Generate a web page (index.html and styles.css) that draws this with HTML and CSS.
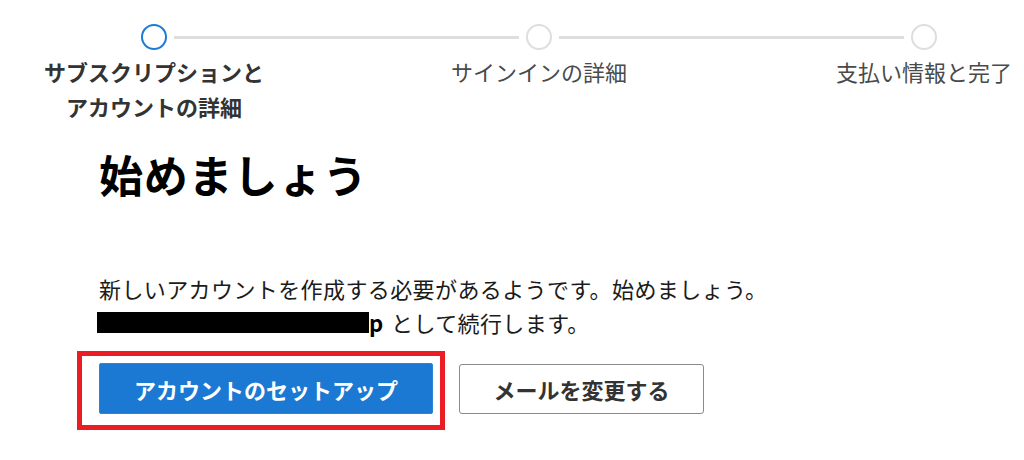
FILE: index.html
```html
<!DOCTYPE html>
<html lang="ja">
<head>
    <meta charset="utf-8">
    <title>始めましょう</title>
    <link rel="stylesheet" href="styles.css">
</head>
<body>
    <div class="stepper">
        <div class="step active">
            <span class="dot"></span>
            <span class="step-label">サブスクリプションと<br>アカウントの詳細</span>
        </div>
        <span class="bar"></span>
        <div class="step">
            <span class="dot"></span>
            <span class="step-label">サインインの詳細</span>
        </div>
        <span class="bar"></span>
        <div class="step">
            <span class="dot"></span>
            <span class="step-label">支払い情報と完了</span>
        </div>
    </div>

    <div class="content">
        <h1>始めましょう</h1>
        <p class="lead">
            新しいアカウントを作成する必要があるようです。始めましょう。<br>
            <span class="redact"></span><span class="tail">p</span>として続行します。
        </p>

        <div class="actions">
            <div class="highlight">
                <button class="btn primary">アカウントのセットアップ</button>
            </div>
            <button class="btn secondary">メールを変更する</button>
        </div>
    </div>
</body>
</html>
```

FILE: styles.css
```css
html, body {
    margin: 0;
    background: #ffffff;
    overflow: hidden;
}
body {
    font-family: "Noto Sans CJK JP", "Noto Sans", sans-serif;
    color: #1b1b1b;
}

/* stepper */
.stepper {
    display: flex;
    align-items: flex-start;
    padding: 24px 87px 0 141px;
}
.step {
    display: flex;
    flex-direction: column;
    align-items: center;
    width: 26px;
}
.dot {
    box-sizing: border-box;
    width: 26px;
    height: 26px;
    border: 2px solid #dedede;
    border-radius: 50%;
    background: #fff;
}
.step.active .dot {
    border-color: #1e7bd5;
}
.step-label {
    margin-top: 4px;
    white-space: nowrap;
    text-align: center;
    font-size: 22px;
    line-height: 35px;
    color: #4a4a4a;
}
.step.active .step-label {
    font-weight: bold;
    color: #333;
}
.bar {
    flex: 1;
    height: 3px;
    margin: 12px 7px 0;
    background: #dedede;
}

/* main */
.content {
    padding-left: 99px;
}
h1 {
    margin: 20px 0 0;
    font-size: 44px;
    line-height: 60px;
    font-weight: bold;
    letter-spacing: 0.8px;
    color: #000;
}
.lead {
    margin: 67px 0 0;
    font-size: 22px;
    line-height: 34px;
    letter-spacing: 0.4px;
}
.redact {
    display: inline-block;
    width: 272px;
    height: 21px;
    margin-left: -2px;
    background: #000;
    vertical-align: -1px;
}
.tail {
    display: inline-block;
    width: 12px;
    margin-right: 10px;
    font-weight: bold;
    color: #000;
}

.actions {
    display: flex;
    align-items: flex-start;
    gap: 14px;
    margin: 12px 0 0 -22px;
}
.highlight {
    border: 5px solid #ec1c24;
    padding: 7px 7px 11px 17px;
}
.btn {
    box-sizing: border-box;
    height: 51px;
    font-family: inherit;
    font-size: 22px;
    font-weight: bold;
    cursor: pointer;
}
.primary {
    width: 334px;
    background: #1b79d3;
    color: #fff;
    border: 1px solid #2a84d8;
    border-radius: 2px;
}
.secondary {
    width: 245px;
    height: 50px;
    margin-top: 13px;
    background: #fff;
    color: #333;
    border: 1px solid #8a8a8a;
    border-radius: 3px;
}
```
